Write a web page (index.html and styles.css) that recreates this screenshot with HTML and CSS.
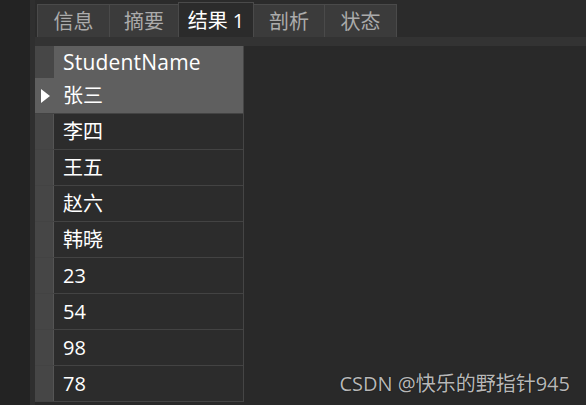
FILE: index.html
```html
<!DOCTYPE html>
<html lang="zh-CN">
<head>
<meta charset="utf-8">
<link rel="stylesheet" href="styles.css">
</head>
<body>
<div class="app">
  <div class="side"></div>
  <div class="gutter"></div>
  <div class="main">
    <div class="tabbar">
      <div class="tab t1">信息</div>
      <div class="tab t2">摘要</div>
      <div class="tab active">结果 1</div>
      <div class="tab t4">剖析</div>
      <div class="tab t5">状态</div>
    </div>
    <div class="strip"></div>
    <div class="gridarea">
      <div class="grid">
        <div class="row head"><div class="ind"></div><div class="cell">StudentName</div></div>
        <div class="row sel"><div class="ind"><span class="tri"></span></div><div class="cell">张三</div></div>
        <div class="row"><div class="ind"></div><div class="cell">李四</div></div>
        <div class="row"><div class="ind"></div><div class="cell">王五</div></div>
        <div class="row"><div class="ind"></div><div class="cell">赵六</div></div>
        <div class="row"><div class="ind"></div><div class="cell">韩晓</div></div>
        <div class="row"><div class="ind"></div><div class="cell">23</div></div>
        <div class="row"><div class="ind"></div><div class="cell">54</div></div>
        <div class="row"><div class="ind"></div><div class="cell">98</div></div>
        <div class="row"><div class="ind"></div><div class="cell">78</div></div>
      </div>
    </div>
  </div>
</div>
<div class="watermark">CSDN @快乐的野指针945</div>
</body>
</html>
```
FILE: styles.css
```css
html, body {
  margin: 0;
  padding: 0;
}
body {
  width: 586px;
  height: 405px;
  overflow: hidden;
  background: #232323;
  font-family: "Open Sans", "Noto Sans CJK SC", sans-serif;
  position: relative;
}
.app {
  display: flex;
  height: 405px;
}
.side {
  width: 30px;
  background: #232323;
}
.gutter {
  width: 5px;
  background: #2f2f2f;
}
.main {
  flex: 1;
  display: flex;
  flex-direction: column;
  background: #282828;
}
.tabbar {
  height: 37px;
  background: #2b2b2b;
  display: flex;
  align-items: flex-end;
  padding-left: 2px;
}
.tab {
  height: 33px;
  box-sizing: border-box;
  border: 1px solid #4a4a4a;
  border-bottom: none;
  border-left: none;
  background: #3b3b3b;
  color: #ababab;
  font-size: 20px;
  line-height: 33px;
  text-align: center;
}
.t1 {
  border-left: 1px solid #4a4a4a;
  width: 73px;
}
.t2 {
  width: 69px;
}
.t4 {
  width: 71px;
}
.t5 {
  width: 72px;
}
.tab.active {
  height: 35px;
  background: #2b2b2b;
  color: #ffffff;
  border-left: 1px solid #4a4a4a;
  margin-left: -1px;
  width: 76px;
  line-height: 35px;
}
.strip {
  height: 9px;
  background: #333333;
}
.gridarea {
  flex: 1;
  background: #292929;
}
.grid {
  width: 208px;
  border-right: 1px solid #454545;
}
.row {
  display: flex;
  height: 36px;
  box-sizing: border-box;
  border-bottom: 1px solid #434343;
  background: #2c2c2c;
}
.row.head {
  height: 32px;
  border-bottom: none;
  background: #5f5f5f;
}
.row.sel {
  background: #5f5f5f;
}
.ind {
  width: 19px;
  flex: none;
  background: #464646;
  border-right: 1px solid #555555;
  box-sizing: border-box;
  display: flex;
  align-items: center;
  justify-content: center;
}
.row.head .ind {
  background: #474747;
  border-right: none;
}
.row.sel .ind {
  background: #5f5f5f;
  border-right: none;
}
.tri {
  width: 0;
  height: 0;
  border-left: 9px solid #ffffff;
  border-top: 7px solid transparent;
  border-bottom: 7px solid transparent;
  margin-left: 2px;
}
.cell {
  flex: 1;
  padding-left: 9px;
  color: #ffffff;
  font-size: 20px;
  line-height: 36px;
}
.row.head .cell {
  line-height: 32px;
  font-size: 21px;
  letter-spacing: 0.2px;
}
.watermark {
  position: absolute;
  right: 16px;
  bottom: 8px;
  font-size: 20px;
  color: #b8b8b8;
  text-shadow: 0 0 1px #000;
}
```
